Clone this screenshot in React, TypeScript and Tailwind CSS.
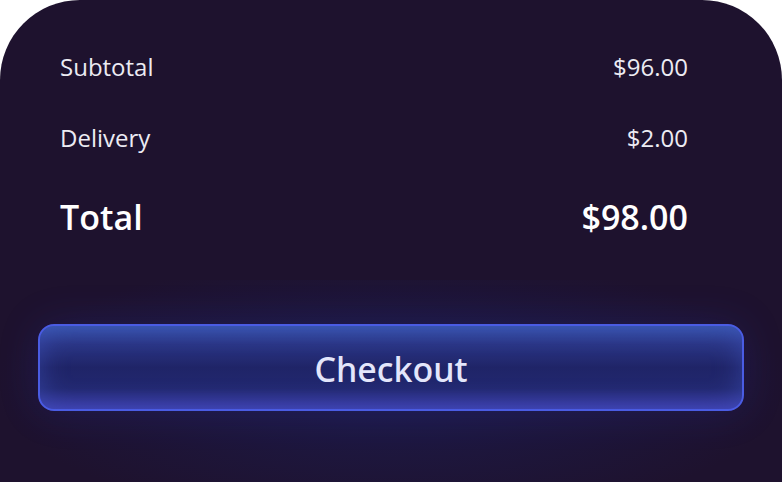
export default function App() {
  const rows = [
    { label: "Subtotal", value: "$96.00" },
    { label: "Delivery", value: "$2.00" },
  ];

  return (
    <main className="w-[782px] h-[482px] bg-white overflow-hidden font-['Open_Sans',sans-serif]">
      <div className="relative h-full rounded-t-[80px] bg-[#1e122e] overflow-hidden">
        {/* glow around the button */}
        <div className="absolute left-[0px] right-[0px] top-[280px] h-[240px] bg-[radial-gradient(ellipse_at_50%_45%,rgba(28,32,95,0.6),rgba(30,18,46,0)_72%)]" />

        <div className="relative flex flex-col pl-[60px] pr-[94px] pt-[49px]">
          {rows.map((r) => (
            <div
              key={r.label}
              className="flex items-center justify-between h-[36px] mb-[35px] text-[24px] text-[#ecebf3]"
            >
              <span>{r.label}</span>
              <span>{r.value}</span>
            </div>
          ))}
          <div className="flex items-center justify-between h-[40px] mt-[6px] text-[34px] font-semibold text-white">
            <span>Total</span>
            <span>$98.00</span>
          </div>
        </div>

        <div className="relative px-[38px] mt-[87px]">
          <button className="w-full h-[87px] pt-[3px] rounded-[16px] border-2 border-[#4a5ce3] bg-[linear-gradient(to_bottom,#3551a6_0%,#2a3584_22%,#1f2467_50%,#222870_75%,#3b3ba6_100%)] shadow-[inset_0_0_28px_rgba(70,95,210,0.45),0_0_40px_rgba(40,55,190,0.2)] font-['Noto_Sans',sans-serif] text-[34px] font-medium text-[#e3e6fb]">
            Checkout
          </button>
        </div>
      </div>
    </main>
  );
}
